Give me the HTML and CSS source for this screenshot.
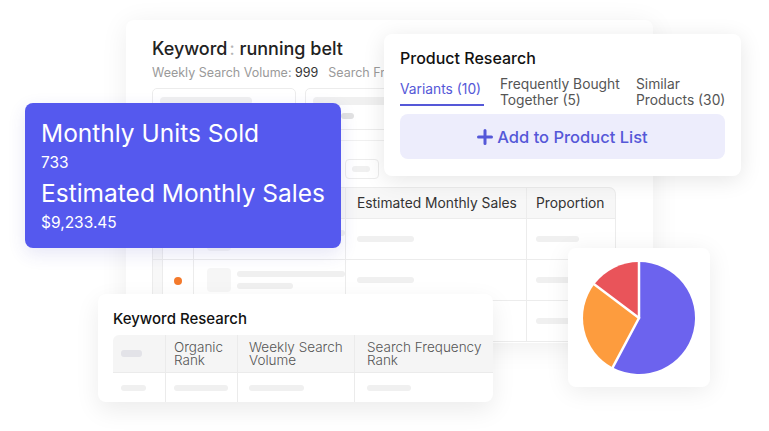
FILE: index.html
```html
<!DOCTYPE html>
<html lang="en">
<head>
  <meta charset="UTF-8">
  <meta name="viewport" content="width=device-width, initial-scale=1.0">
  <title>Keyword Insights</title>
  <link rel="stylesheet" href="styles.css">
</head>
<body>
  <div class="stage">

    <!-- background keyword card -->
    <section class="card main-card">
      <h2 class="kw-title">Keyword<span class="kw-colon">:</span>running belt</h2>
      <div class="kw-meta">Weekly Search Volume: <b>999</b><span class="kw-meta-gap">Search Frequency Rank: <b>1,204</b></span></div>

      <div class="filters">
        <div class="filter-box">
          <span class="bar bar-wide"></span>
        </div>
        <div class="filter-box">
          <span class="bar bar-wide"></span>
          <span class="bar bar-pill"></span>
        </div>
      </div>
      <div class="filter-divider"></div>
      <div class="filter-row">
        <div class="mini-box"><span class="bar bar-mini"></span></div>
      </div>

      <table class="grid">
        <thead>
          <tr>
            <th class="c-fix"></th>
            <th class="c-sel"></th>
            <th class="c-prod"></th>
            <th class="c-sales">Estimated Monthly Sales</th>
            <th class="c-prop">Proportion</th>
          </tr>
        </thead>
        <tbody>
          <tr>
            <td class="c-fix"></td>
            <td class="c-sel"></td>
            <td class="c-prod"><div class="prod"><span class="thumb"></span><span class="prod-lines"><span class="bar bar-l1"></span><span class="bar bar-l2"></span></span></div></td>
            <td class="c-sales"><span class="bar bar-sales"></span></td>
            <td class="c-prop"><span class="bar bar-prop"></span></td>
          </tr>
          <tr>
            <td class="c-fix"></td>
            <td class="c-sel"><span class="dot"></span></td>
            <td class="c-prod"><div class="prod"><span class="thumb"></span><span class="prod-lines"><span class="bar bar-l1"></span><span class="bar bar-l2"></span></span></div></td>
            <td class="c-sales"><span class="bar bar-sales"></span></td>
            <td class="c-prop"><span class="bar bar-prop"></span></td>
          </tr>
          <tr>
            <td class="c-fix"></td>
            <td class="c-sel"><span class="dot"></span></td>
            <td class="c-prod"><div class="prod"><span class="thumb"></span><span class="prod-lines"><span class="bar bar-l1"></span><span class="bar bar-l2"></span></span></div></td>
            <td class="c-sales"><span class="bar bar-sales"></span></td>
            <td class="c-prop"><span class="bar bar-prop"></span></td>
          </tr>
        </tbody>
      </table>
    </section>

    <!-- sales summary -->
    <section class="card stats-card">
      <div class="stat-label">Monthly Units Sold</div>
      <div class="stat-value">733</div>
      <div class="stat-label">Estimated Monthly Sales</div>
      <div class="stat-value">$9,233.45</div>
    </section>

    <!-- product research -->
    <section class="card product-card">
      <h3 class="card-title">Product Research</h3>
      <div class="tabs">
        <div class="tab active">Variants (10)</div>
        <div class="tab tab-fbt">Frequently Bought Together (5)</div>
        <div class="tab tab-sim">Similar Products (30)</div>
      </div>
      <button class="add-btn">
        <svg width="16" height="16" viewBox="0 0 16 16"><path d="M8 1.5v13M1.5 8h13" stroke="currentColor" stroke-width="3" stroke-linecap="round"/></svg>
        Add to Product List
      </button>
    </section>

    <!-- keyword research -->
    <section class="card kw-card">
      <h3 class="card-title kw-card-title">Keyword Research</h3>
      <table class="kw-grid">
        <thead>
          <tr>
            <th class="k1"><span class="bar bar-head"></span></th>
            <th class="k2">Organic Rank</th>
            <th class="k3">Weekly Search Volume</th>
            <th class="k4">Search Frequency Rank</th>
          </tr>
        </thead>
        <tbody>
          <tr>
            <td class="k1"><span class="bar bar-k1"></span></td>
            <td class="k2"><span class="bar bar-k2"></span></td>
            <td class="k3"><span class="bar bar-k3"></span></td>
            <td class="k4"><span class="bar bar-k4"></span></td>
          </tr>
        </tbody>
      </table>
    </section>

    <!-- proportion chart -->
    <section class="card pie-card">
      <svg width="116" height="116" viewBox="0 0 116 116">
        <path d="M58 58 L58 2 A56 56 0 1 1 31.71 107.44 Z" fill="#6c63ee"/>
        <path d="M58 58 L31.71 107.44 A56 56 0 0 1 13.28 24.30 Z" fill="#fd9c3e"/>
        <path d="M58 58 L13.28 24.30 A56 56 0 0 1 58 2 Z" fill="#e9545a"/>
        <g stroke="#fff" stroke-width="2.5" stroke-linecap="round">
          <line x1="58" y1="58" x2="58" y2="1"/>
          <line x1="58" y1="58" x2="31.2" y2="108.3"/>
          <line x1="58" y1="58" x2="12.5" y2="23.7"/>
        </g>
      </svg>
    </section>

  </div>
</body>
</html>
```

FILE: styles.css
```css
* {
  box-sizing: border-box;
}
body {
  margin: 0;
  background: #fff;
  font-family: Inter, "Liberation Sans", Arial, sans-serif;
  color: #222;
}
.stage {
  position: relative;
  width: 769px;
  height: 431px;
  overflow: hidden;
}
.card {
  position: absolute;
  background: #fff;
  border-radius: 8px;
}
.bar {
  display: block;
  height: 6px;
  border-radius: 3px;
  background: #f0f0f0;
}

/* main card */
.main-card {
  left: 126px;
  top: 20px;
  width: 527px;
  height: 323px;
  padding: 17px 0 0 26px;
  overflow: hidden;
  box-shadow: 0 4px 28px rgba(0, 0, 0, 0.07);
}
.kw-title {
  margin: 0;
  font-size: 18px;
  font-weight: 500;
  line-height: 24px;
  color: #222;
}
.kw-colon {
  display: inline-block;
  width: 12px;
  padding-left: 2px;
  color: #b5b5b5;
  font-weight: 400;
}
.kw-meta {
  margin-top: 3px;
  width: 232px;
  overflow: hidden;
  font-size: 12.5px;
  line-height: 18px;
  color: #9a9a9a;
  white-space: nowrap;
}
.kw-meta b {
  font-weight: 400;
  color: #333;
}
.kw-meta-gap {
  margin-left: 10px;
}
.filters {
  display: flex;
  gap: 9px;
  margin-top: 6px;
}
.filter-box {
  width: 144px;
  height: 42px;
  border: 1px solid #ececec;
  border-radius: 5px;
  padding: 8px 7px;
  display: flex;
  flex-direction: column;
  gap: 8px;
}
.filter-box:last-child {
  width: 170px;
}
.bar-wide {
  width: 92px;
  height: 8px;
  border-radius: 4px;
}
.bar-pill {
  width: 13px;
  height: 6px;
  margin-left: 28px;
  background: #e2e2e2;
}
.filter-divider {
  margin-top: 10px;
  height: 1px;
  width: 300px;
  background: #f0f0f0;
}
.filter-row {
  margin-top: 18px;
  padding-left: 193px;
}
.mini-box {
  width: 34px;
  height: 20px;
  border: 1px solid #ececec;
  border-radius: 4px;
  padding: 6px 6px;
}
.bar-mini {
  width: 18px;
}

.grid {
  margin-top: 8px;
  border-collapse: separate;
  border-spacing: 0;
  table-layout: fixed;
  width: 464px;
  font-size: 13.8px;
}
.grid th {
  height: 32px;
  background: #f7f7f7;
  font-weight: 400;
  color: #333;
  text-align: left;
  padding: 0 0 0 11px;
  border-bottom: 1px solid #ececec;
  border-right: 1px solid #ececec;
  border-top: 1px solid #ececec;
  white-space: nowrap;
}
.grid th:first-child {
  border-left: 1px solid #ececec;
}
.grid th:last-child {
  border-top-right-radius: 7px;
}
.grid td {
  height: 41px;
  padding: 0 0 0 11px;
  border-bottom: 1px solid #ececec;
  border-right: 1px solid #ececec;
  vertical-align: middle;
}
.grid td:first-child {
  border-left: 1px solid #ececec;
}
.c-fix { width: 11px; }
.grid td.c-fix { background: #f8f8f8; padding: 0; }
.grid th.c-fix { padding: 0; }
.c-sel { width: 31px; }
.grid td.c-sel { padding: 0; text-align: center; }
.c-prod { width: 152px; }
.grid td.c-prod { padding-left: 13px; }
.c-sales { width: 181px; }
.c-prop { width: 89px; }
.grid th.c-prop { padding-left: 9px; }
.grid td.c-prop { padding-left: 9px; }
.dot {
  display: inline-block;
  width: 8px;
  height: 8px;
  border-radius: 50%;
  background: #f47a2c;
}
.prod {
  display: flex;
  gap: 6px;
  align-items: center;
}
.thumb {
  width: 24px;
  height: 24px;
  border-radius: 4px;
  background: #f6f6f6;
}
.prod-lines {
  display: flex;
  flex-direction: column;
  gap: 6px;
}
.bar-l1 { width: 108px; }
.bar-l2 { width: 56px; }
.bar-sales { width: 57px; }
.bar-prop { width: 43px; }

/* blue stats card */
.stats-card {
  left: 25px;
  top: 103px;
  width: 316px;
  height: 145px;
  background: #5559ee;
  color: #fff;
  padding: 14px 16px;
  box-shadow: 0 6px 18px rgba(60, 60, 180, 0.12);
}
.stat-label {
  font-size: 24.5px;
  line-height: 32px;
}
.stat-value {
  font-size: 15.5px;
  line-height: 28px;
}

/* product research */
.product-card {
  left: 384px;
  top: 34px;
  width: 357px;
  height: 142px;
  padding: 12px 16px 0;
  box-shadow: 0 4px 22px rgba(0, 0, 0, 0.1);
}
.card-title {
  margin: 0;
  font-size: 16px;
  font-weight: 500;
  line-height: 24px;
  color: #111;
}
.tabs {
  display: flex;
  align-items: center;
  gap: 16px;
  margin-top: 6px;
  height: 32px;
  font-size: 13.8px;
  line-height: 16px;
  color: #555;
}
.tab {
  flex: none;
}
.tab.active {
  width: 84px;
  color: #5558d8;
  white-space: nowrap;
  padding-bottom: 7px;
  border-bottom: 2px solid #5558d8;
  margin-top: 3px;
}
.tab-fbt {
  width: 120px;
}
.tab-sim {
  width: 94px;
}
.add-btn {
  margin-top: 6px;
  width: 100%;
  height: 45px;
  border: none;
  border-radius: 8px;
  background: #ededfc;
  color: #5558d8;
  font-family: inherit;
  font-size: 16.5px;
  font-weight: 500;
  display: flex;
  align-items: center;
  justify-content: center;
  gap: 4px;
}

/* keyword research */
.kw-card {
  left: 98px;
  top: 294px;
  width: 395px;
  height: 108px;
  padding: 15px 0 0 15px;
  overflow: hidden;
  box-shadow: 0 8px 24px rgba(0, 0, 0, 0.08);
}
.kw-card-title {
  font-size: 15px;
  line-height: 20px;
}
.kw-grid {
  margin-top: 6px;
  border-collapse: separate;
  border-spacing: 0;
  table-layout: fixed;
  width: 400px;
  font-size: 13.5px;
}
.kw-grid th {
  height: 38px;
  background: #f5f5f5;
  font-weight: 300;
  color: #555;
  line-height: 13px;
  text-align: left;
  padding: 0 8px 0 8px;
  border-right: 1px solid #ebebeb;
  border-bottom: 1px solid #ebebeb;
  vertical-align: middle;
}
.kw-grid th:first-child {
  border-top-left-radius: 6px;
}
.kw-grid td {
  height: 29px;
  padding: 0 8px;
  border-right: 1px solid #ebebeb;
}
.k1 { width: 53px; }
.k2 { width: 72px; }
.k3 { width: 117px; }
.k4 { width: 158px; }
.kw-grid .k4 { padding-left: 12px; padding-right: 20px; }
.kw-grid .k3 { padding-left: 11px; }
.bar-head { width: 21px; height: 7px; background: #e3e3e8; }
.bar-k1 { width: 25px; }
.bar-k2 { width: 54px; }
.bar-k3 { width: 55px; }
.bar-k4 { width: 44px; }

/* pie */
.pie-card {
  left: 568px;
  top: 248px;
  width: 142px;
  height: 139px;
  display: flex;
  align-items: center;
  justify-content: center;
  box-shadow: 0 4px 24px rgba(0, 0, 0, 0.08);
}
```
